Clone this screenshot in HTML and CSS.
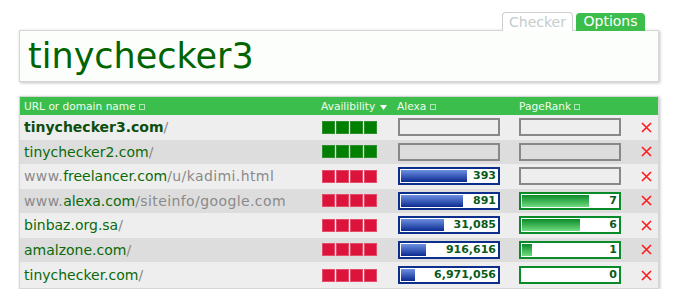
FILE: index.html
```html
<!DOCTYPE html>
<html>
<head>
<meta charset="utf-8">
<link rel="stylesheet" href="styles.css">
</head>
<body>
<div class="page">
  <div class="tabs">
    <div class="tab tab-active">Checker</div>
    <div class="tab tab-green">Options</div>
  </div>
  <div class="titlebox"><h1 class="title">tinychecker3</h1></div>

  <div class="table">
    <div class="row head">
      <div class="c-url">URL or domain name <span class="sq"></span></div>
      <div class="c-av">Availibility <svg class="tri" width="7" height="5" viewBox="0 0 7 5"><path d="M0 0H7L3.5 5Z" fill="#fff"/></svg></div>
      <div class="c-al">Alexa <span class="sq"></span></div>
      <div class="c-pr">PageRank <span class="sq"></span></div>
      <div></div>
    </div>

    <div class="row light">
      <div class="c-url"><b class="dom">tinychecker3.com</b><span class="path">/</span></div>
      <div class="c-av"><span class="av g"></span><span class="av g"></span><span class="av g"></span><span class="av g"></span></div>
      <div class="c-al"><div class="box empty"></div></div>
      <div class="c-pr"><div class="box empty"></div></div>
      <div class="c-x"><svg width="11" height="11" viewBox="0 0 11 11"><path d="M1 1L10 10M10 1L1 10" stroke="#ff1a1a" stroke-width="1.6"/></svg></div>
    </div>

    <div class="row dark">
      <div class="c-url"><span class="dom">tinychecker2.com</span><span class="path">/</span></div>
      <div class="c-av"><span class="av g"></span><span class="av g"></span><span class="av g"></span><span class="av g"></span></div>
      <div class="c-al"><div class="box empty"></div></div>
      <div class="c-pr"><div class="box empty"></div></div>
      <div class="c-x"><svg width="11" height="11" viewBox="0 0 11 11"><path d="M1 1L10 10M10 1L1 10" stroke="#ff1a1a" stroke-width="1.6"/></svg></div>
    </div>

    <div class="row light">
      <div class="c-url"><span class="path">www.</span><span class="dom">freelancer.com</span><span class="path">/u/kadimi.html</span></div>
      <div class="c-av"><span class="av r"></span><span class="av r"></span><span class="av r"></span><span class="av r"></span></div>
      <div class="c-al"><div class="box alexa"><span class="bar" style="width:66px"></span><span class="num">393</span></div></div>
      <div class="c-pr"><div class="box empty"></div></div>
      <div class="c-x"><svg width="11" height="11" viewBox="0 0 11 11"><path d="M1 1L10 10M10 1L1 10" stroke="#ff1a1a" stroke-width="1.6"/></svg></div>
    </div>

    <div class="row dark">
      <div class="c-url"><span class="path">www.</span><span class="dom">alexa.com</span><span class="path">/siteinfo/google.com</span></div>
      <div class="c-av"><span class="av r"></span><span class="av r"></span><span class="av r"></span><span class="av r"></span></div>
      <div class="c-al"><div class="box alexa"><span class="bar" style="width:62px"></span><span class="num">891</span></div></div>
      <div class="c-pr"><div class="box pr"><span class="bar" style="width:67px"></span><span class="num">7</span></div></div>
      <div class="c-x"><svg width="11" height="11" viewBox="0 0 11 11"><path d="M1 1L10 10M10 1L1 10" stroke="#ff1a1a" stroke-width="1.6"/></svg></div>
    </div>

    <div class="row light">
      <div class="c-url"><span class="dom">binbaz.org.sa</span><span class="path">/</span></div>
      <div class="c-av"><span class="av r"></span><span class="av r"></span><span class="av r"></span><span class="av r"></span></div>
      <div class="c-al"><div class="box alexa"><span class="bar" style="width:43px"></span><span class="num">31,085</span></div></div>
      <div class="c-pr"><div class="box pr"><span class="bar" style="width:58px"></span><span class="num">6</span></div></div>
      <div class="c-x"><svg width="11" height="11" viewBox="0 0 11 11"><path d="M1 1L10 10M10 1L1 10" stroke="#ff1a1a" stroke-width="1.6"/></svg></div>
    </div>

    <div class="row dark">
      <div class="c-url"><span class="dom">amalzone.com</span><span class="path">/</span></div>
      <div class="c-av"><span class="av r"></span><span class="av r"></span><span class="av r"></span><span class="av r"></span></div>
      <div class="c-al"><div class="box alexa"><span class="bar" style="width:25px"></span><span class="num">916,616</span></div></div>
      <div class="c-pr"><div class="box pr"><span class="bar" style="width:10px"></span><span class="num">1</span></div></div>
      <div class="c-x"><svg width="11" height="11" viewBox="0 0 11 11"><path d="M1 1L10 10M10 1L1 10" stroke="#ff1a1a" stroke-width="1.6"/></svg></div>
    </div>

    <div class="row light last">
      <div class="c-url"><span class="dom">tinychecker.com</span><span class="path">/</span></div>
      <div class="c-av"><span class="av r"></span><span class="av r"></span><span class="av r"></span><span class="av r"></span></div>
      <div class="c-al"><div class="box alexa"><span class="bar" style="width:14px"></span><span class="num">6,971,056</span></div></div>
      <div class="c-pr"><div class="box pr"><span class="bar" style="width:0px"></span><span class="num">0</span></div></div>
      <div class="c-x"><svg width="11" height="11" viewBox="0 0 11 11"><path d="M1 1L10 10M10 1L1 10" stroke="#ff1a1a" stroke-width="1.6"/></svg></div>
    </div>
  </div>
</div>
</body>
</html>
```

FILE: styles.css
```css
html, body {
  margin: 0;
  padding: 0;
  background: #ffffff;
}
body {
  font-family: "DejaVu Sans", Verdana, sans-serif;
}
.page {
  width: 640px;
  padding: 13px 0 0 19px;
}
.tabs {
  display: flex;
  justify-content: flex-end;
  align-items: flex-end;
  gap: 3px;
  padding-right: 14px;
  height: 18px;
  position: relative;
  z-index: 2;
  margin-bottom: -1px;
}
.tab {
  font-size: 14px;
  line-height: 17px;
  border-radius: 4px 4px 0 0;
  box-sizing: border-box;
}
.tab-active {
  height: 19px;
  width: 71px;
  background: #fff;
  color: #c4cccc;
  border: 1px solid #cfcfcf;
  border-bottom: none;
  text-align: center;
  padding-top: 1px;
}
.tab-green {
  height: 18px;
  width: 69px;
  background: #3cbe4c;
  color: #ffffff;
  text-align: center;
}
.titlebox {
  height: 52px;
  box-sizing: border-box;
  border: 1px solid #d6d6d6;
  background: #fcfefc;
  box-shadow: 1px 1px 3px rgba(0,0,0,0.25);
  position: relative;
  z-index: 1;
}
.title {
  margin: 0;
  font-weight: normal;
  font-size: 35px;
  line-height: 51px;
  color: #006400;
  padding-left: 8px;
}
.table {
  margin-top: 14px;
  border: 1px solid #d6d6d6;
  box-shadow: 1px 1px 3px rgba(0,0,0,0.25);
  background: #eeeeee;
}
.row {
  display: grid;
  grid-template-columns: 301px 76px 122px 122px 1fr;
  align-items: center;
  height: 24.5px;
  font-size: 14px;
}
.row.head {
  height: 18px;
  background: #3cbe4c;
  color: #effcef;
  font-size: 10.6px;
}
.row.last {
  height: 26px;
}
.light { background: #eeeeee; }
.dark { background: #dddddd; }
.c-url {
  padding-left: 4px;
  white-space: nowrap;
}
.head .c-url, .head .c-av, .head .c-al, .head .c-pr {
  line-height: 18px;
}
.sq {
  display: inline-block;
  width: 4px;
  height: 4px;
  border: 1px solid rgba(255,255,255,0.6);
  vertical-align: 0;
}
.tri {
  vertical-align: 0;
  margin-left: 1px;
}
.dom { color: #0a6a0a; }
b.dom { font-weight: bold; color: #0d4d0d; }
.path { color: #8a8a8a; letter-spacing: 0.4px; }
.c-av {
  display: flex;
  gap: 1px;
  padding-left: 1px;
}
.head .c-av { display: block; padding-left: 0; }
.av {
  width: 13px;
  height: 13px;
  box-sizing: border-box;
}
.av.g { background: #008000; border: 1px solid #2e8f2e; }
.av.r { background: #dc143c; border: 1px solid #e24d6b; }
.box {
  width: 102px;
  height: 18px;
  box-sizing: border-box;
  border: 2px solid #888888;
  padding: 1px;
  display: grid;
}
.c-al .box { margin-left: 1px; }
.box.alexa, .box.pr {
  background: #ffffff;
}
.box.alexa { border-color: #0b2f8a; }
.box.pr { border-color: #0b8a2a; }
.bar {
  grid-area: 1 / 1;
  justify-self: start;
  height: 12px;
}
.alexa .bar {
  background: linear-gradient(#6d90e2, #0a2a90);
}
.pr .bar {
  background: linear-gradient(#0a8a2a, #6fdc80);
}
.num {
  grid-area: 1 / 1;
  justify-self: end;
  font-size: 11px;
  font-weight: bold;
  line-height: 12px;
  color: #0a5a1a;
  padding-right: 1px;
}
.c-x {
  display: flex;
  align-items: center;
}
.c-x svg { display: block; }
```
